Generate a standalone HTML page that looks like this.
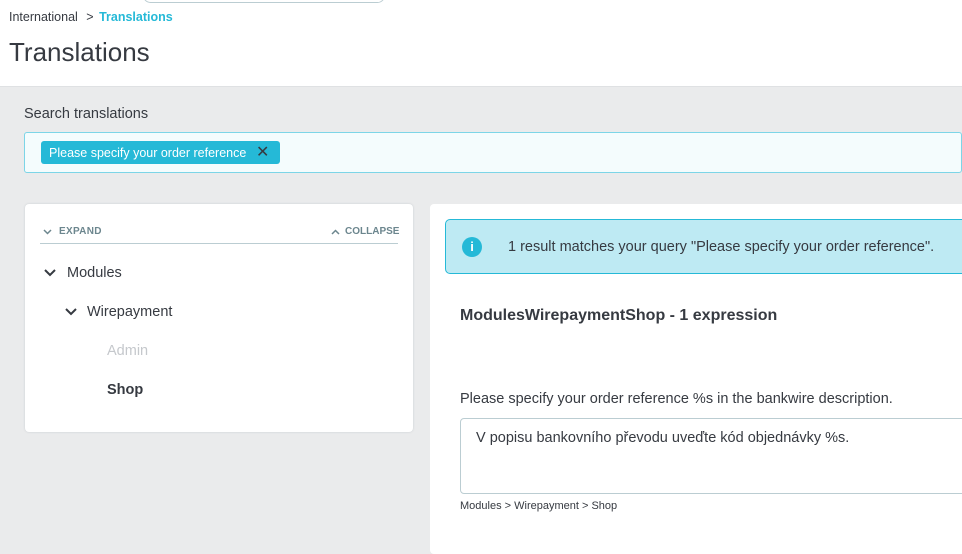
<!DOCTYPE html><html><head><style>
body{margin:0;width:962px;height:547px;overflow:hidden;background:#eaebec;font-family:"Liberation Sans",sans-serif;color:#363a41;position:relative}
.a{position:absolute;white-space:nowrap}
</style></head><body>
<div class="a" style="left:0;top:0;width:962px;height:86px;background:#fff;border-bottom:1px solid #dfe1e3"></div>
<div class="a" style="left:143px;top:-12px;width:240px;height:13px;border:1px solid #bbcdd2;border-radius:8px;background:#fff"></div>
<div class="a" style="left:9px;top:10px;font-size:12.5px;color:#363a41">International <span style="margin-left:5px">&gt;</span> <span style="color:#25b9d7;font-weight:bold;margin-left:2px">Translations</span></div>
<div class="a" style="left:9px;top:37px;font-size:26px;color:#363a41">Translations</div>
<div class="a" style="left:24px;top:106px;font-size:14.5px">Search translations</div>
<div class="a" style="left:24px;top:132px;width:936px;height:39px;background:#f4fcfd;border:1px solid #7cd5e7;border-radius:3px"></div>
<div class="a" style="left:41px;top:141px;width:239px;height:23px;background:#25b9d7;border-radius:3px;color:#fff;font-size:12.5px;line-height:24px;padding-left:8px;box-sizing:border-box">Please specify your order reference<span style="position:absolute;left:215px;color:#363a41;font-size:16px">✕</span></div>
<div class="a" style="left:25px;top:204px;width:388px;height:228px;background:#fff;border-radius:4px;box-shadow:0 0 2px #c8cdd0"></div>
<svg class="a" style="left:43px;top:229px" width="9" height="6"><path d="M1 1l3.5 3.5L8 1" stroke="#6c868e" stroke-width="1.5" fill="none"/></svg>
<div class="a" style="left:59px;top:226px;font-size:10px;font-weight:bold;color:#6c868e;letter-spacing:.3px">EXPAND</div>
<svg class="a" style="left:331px;top:229px" width="9" height="6"><path d="M1 5l3.5-3.5L8 5" stroke="#6c868e" stroke-width="1.5" fill="none"/></svg>
<div class="a" style="left:345px;top:226px;font-size:10px;font-weight:bold;color:#6c868e;letter-spacing:0">COLLAPSE</div>
<div class="a" style="left:40px;top:243px;width:358px;height:1px;background:#bbcdd2"></div>
<svg class="a" style="left:44px;top:269px" width="12" height="8"><path d="M1 1l5 5 5-5" stroke="#363a41" stroke-width="2" fill="none"/></svg>
<div class="a" style="left:67px;top:265px;font-size:14.5px">Modules</div>
<svg class="a" style="left:65px;top:308px" width="12" height="8"><path d="M1 1l5 5 5-5" stroke="#363a41" stroke-width="2" fill="none"/></svg>
<div class="a" style="left:87px;top:304px;font-size:14.5px">Wirepayment</div>
<div class="a" style="left:107px;top:343px;font-size:14.5px;color:#c5c8cc">Admin</div>
<div class="a" style="left:107px;top:382px;font-size:14.5px;font-weight:bold">Shop</div>
<div class="a" style="left:430px;top:204px;width:540px;height:350px;background:#fff;border-radius:4px"></div>
<div class="a" style="left:445px;top:219px;width:530px;height:53px;background:#beeaf3;border:1px solid #25b9d7;border-radius:5px"></div>
<div class="a" style="left:462px;top:237px;width:20px;height:20px;border-radius:50%;background:#25b9d7;color:#fff;font-size:13px;font-weight:bold;text-align:center;line-height:20px">i</div>
<div class="a" style="left:508px;top:239px;font-size:14.5px">1 result matches your query "Please specify your order reference".</div>
<div class="a" style="left:460px;top:307px;font-size:16px;font-weight:bold">ModulesWirepaymentShop - 1 expression</div>
<div class="a" style="left:460px;top:391px;font-size:14.5px">Please specify your order reference %s in the bankwire description.</div>
<div class="a" style="left:460px;top:418px;width:520px;height:74px;border:1px solid #bbcdd2;border-radius:4px"></div>
<div class="a" style="left:476px;top:430px;font-size:14.5px">V popisu bankovního převodu uveďte kód objednávky %s.</div>
<div class="a" style="left:460px;top:500px;font-size:11px">Modules &gt; Wirepayment &gt; Shop</div>
</body></html>
